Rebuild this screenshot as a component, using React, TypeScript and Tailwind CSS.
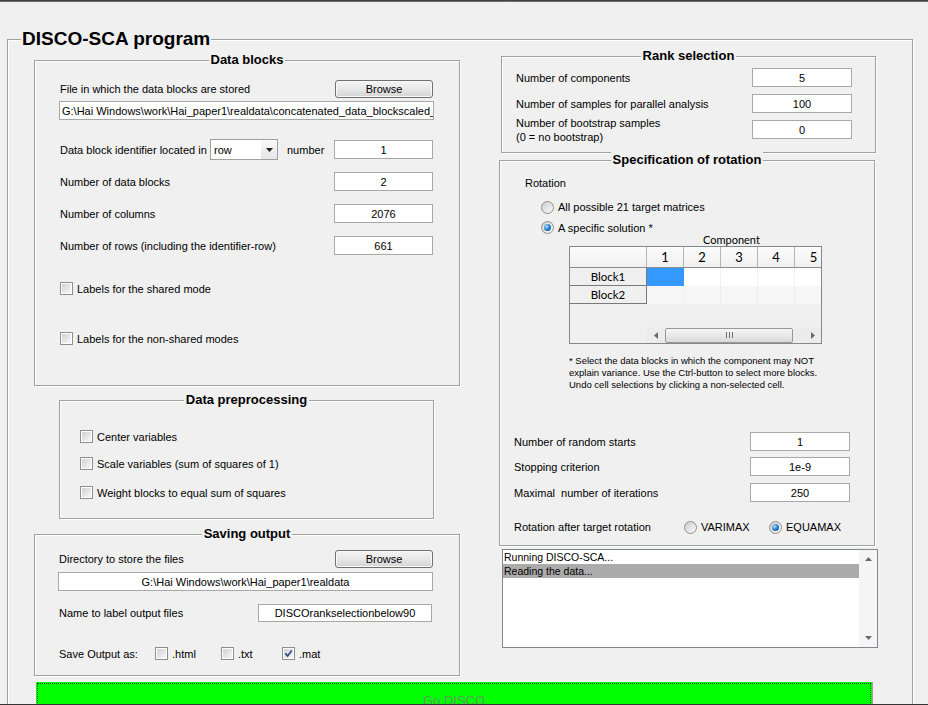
import React from "react";

function Panel({ title, className, children }: { title: string; className: string; children?: React.ReactNode }) {
  return (
    <div className={"border border-[#a0a0a0] shadow-[inset_1px_1px_0_#fff,1px_1px_0_#fff] " + className}>
      <div className="-mt-[9px] mx-auto w-fit bg-[#f0f0f0] px-[2px] text-[13px] font-bold leading-[15px]">{title}</div>
      {children}
    </div>
  );
}

function Box({ className, children }: { className: string; children?: React.ReactNode }) {
  return (
    <div className={"shrink-0 bg-white border border-[#a8a8a8] flex items-center justify-center whitespace-nowrap overflow-hidden " + className}>
      {children}
    </div>
  );
}

function Btn() {
  return (
    <div className="w-[98px] h-[18px] shrink-0 rounded-[3px] border border-[#707070] bg-linear-to-b from-[#f4f4f4] via-[#e8e8e8] to-[#d3d3d3] shadow-[inset_0_0_0_1px_#fafafa] flex items-center justify-center">
      Browse
    </div>
  );
}

function Check({ checked = false }: { checked?: boolean }) {
  return (
    <div className="w-[13px] h-[13px] shrink-0 border border-[#8e8f8f] bg-white p-[1px]">
      <div className="w-full h-full bg-linear-to-br from-[#d2d2d2] to-[#f8f8f8] flex items-center justify-center">
        {checked && (
          <svg width="9" height="9" viewBox="0 0 9 9">
            <path d="M1.3 4.4 L3.6 6.9 L7.8 1.4" stroke="#2c4a8c" strokeWidth="1.7" fill="none" />
          </svg>
        )}
      </div>
    </div>
  );
}

function Radio({ checked = false }: { checked?: boolean }) {
  return (
    <div className="w-[13px] h-[13px] shrink-0 rounded-full border border-[#8e8f8f] bg-linear-to-br from-[#cdcdcd] to-[#fbfbfb] flex items-center justify-center">
      {checked && (
        <div className="w-[7px] h-[7px] rounded-full bg-[radial-gradient(circle_at_35%_35%,#b4e2ff_0%,#2f86d2_45%,#0b3c75_100%)]" />
      )}
    </div>
  );
}

function Select() {
  return (
    <div className="w-[68px] h-[21px] shrink-0 border border-[#a0a0a0] bg-white flex items-center">
      <span className="pl-[3px] flex-1">row</span>
      <div className="w-[16px] h-full flex items-center justify-center bg-linear-to-b from-[#fafafa] to-[#e6e6e6]">
        <svg width="7" height="4" viewBox="0 0 7 4">
          <path d="M0 0 L7 0 L3.5 4 Z" fill="#222" />
        </svg>
      </div>
    </div>
  );
}

function Tri({ dir }: { dir: "l" | "r" | "u" | "d" }) {
  const d =
    dir === "l" ? "M4 0 L4 7 L0 3.5 Z" : dir === "r" ? "M0 0 L0 7 L4 3.5 Z" : dir === "u" ? "M0 4 L7 4 L3.5 0 Z" : "M0 0 L7 0 L3.5 4 Z";
  const w = dir === "l" || dir === "r" ? 4 : 7;
  const h = dir === "l" || dir === "r" ? 7 : 4;
  return (
    <svg width={w} height={h} viewBox={`0 0 ${w} ${h}`}>
      <path d={d} fill="#6a6a6a" />
    </svg>
  );
}

function Table() {
  return (
    <div className="ml-[69px] w-[253px] h-[98px] border border-[#828790] bg-[#f0f0f0] flex flex-col font-['Lato',sans-serif] text-[12px] leading-[14px] overflow-hidden">
      <div className="flex h-[21px] shrink-0 border-b border-[#8a8a8a] bg-linear-to-b from-[#fcfcfc] to-[#f0f0f0] overflow-hidden">
        <div className="w-[77px] shrink-0 border-r border-[#b5b5b5]" />
        <div className="w-[37px] shrink-0 border-r border-[#b5b5b5] flex items-center justify-center text-[13px]">1</div>
        <div className="w-[37px] shrink-0 border-r border-[#b5b5b5] flex items-center justify-center text-[13px]">2</div>
        <div className="w-[37px] shrink-0 border-r border-[#b5b5b5] flex items-center justify-center text-[13px]">3</div>
        <div className="w-[37px] shrink-0 border-r border-[#b5b5b5] flex items-center justify-center text-[13px]">4</div>
        <div className="w-[37px] shrink-0 flex items-center justify-center text-[13px]">5</div>
      </div>
      <div className="flex h-[18px] shrink-0 overflow-hidden">
        <div className="w-[77px] shrink-0 border-r border-b border-[#7a7a7a] flex items-center justify-center text-[11.5px]">Block1</div>
        <div className="w-[37px] shrink-0 bg-[#3399ff]" />
        <div className="w-[37px] shrink-0 bg-white border-r border-[#f2f2f2]" />
        <div className="w-[37px] shrink-0 bg-white border-r border-[#f2f2f2]" />
        <div className="w-[37px] shrink-0 bg-white border-r border-[#f2f2f2]" />
        <div className="w-[37px] shrink-0 bg-white" />
      </div>
      <div className="flex h-[18px] shrink-0 overflow-hidden">
        <div className="w-[77px] shrink-0 border-r border-b border-[#7a7a7a] flex items-center justify-center text-[11.5px]">Block2</div>
        <div className="w-[37px] shrink-0 bg-[#f6f6f6] border-r border-[#ededed]" />
        <div className="w-[37px] shrink-0 bg-[#f6f6f6] border-r border-[#ededed]" />
        <div className="w-[37px] shrink-0 bg-[#f6f6f6] border-r border-[#ededed]" />
        <div className="w-[37px] shrink-0 bg-[#f6f6f6] border-r border-[#ededed]" />
        <div className="w-[37px] shrink-0 bg-[#f6f6f6]" />
      </div>
      <div className="flex-1" />
      <div className="flex h-[16px] shrink-0">
        <div className="w-[77px] shrink-0" />
        <div className="w-[174px] shrink-0 flex items-center bg-[#ececec]">
          <div className="w-[17px] h-full flex items-center justify-center">
            <Tri dir="l" />
          </div>
          <div className="ml-[1px] w-[128px] h-[15px] rounded-[2px] border border-[#979797] bg-linear-to-b from-[#f6f6f6] to-[#d9d9d9] flex items-center justify-center">
            <svg width="7" height="6" viewBox="0 0 7 6">
              <path d="M0.5 0 V6 M3.5 0 V6 M6.5 0 V6" stroke="#6e6e6e" strokeWidth="1" />
            </svg>
          </div>
          <div className="flex-1" />
          <div className="w-[17px] h-full flex items-center justify-center">
            <Tri dir="r" />
          </div>
        </div>
      </div>
    </div>
  );
}

export default function App() {
  return (
    <div className="w-[928px] h-[705px] overflow-hidden bg-[#f0f0f0] border-b border-[#333] font-['Liberation_Sans',Arial,sans-serif] text-[11px] leading-[14px] text-black">
      <div className="h-[2px] bg-linear-to-b from-[#2a2a2a] to-[#8a8a8a]" />
      <div className="ml-[7px] mt-[37px] w-[906px] h-[700px] border border-[#a0a0a0] shadow-[inset_1px_1px_0_#fff,1px_1px_0_#fff]">
        <div className="-mt-[12px] ml-[13px] w-fit bg-[#f0f0f0] px-[1px] text-[19px] font-bold leading-[22px]">DISCO-SCA program</div>

        <div className="flex items-start">
          {/* Left column */}
          <div className="ml-[26px] w-[426px] shrink-0">
            <Panel title="Data blocks" className="mt-[10px] h-[326px]">
              <div className="mt-[13px] flex h-[18px] items-center pl-[25px] pr-[26px]">
                <span className="flex-1">File in which the data blocks are stored</span>
                <Btn />
              </div>
              <div className="mt-[3px] ml-[24px] w-[375px] h-[19px] bg-white border border-[#a8a8a8] pl-[2px] whitespace-nowrap overflow-hidden flex items-center">
                G:\Hai Windows\work\Hai_paper1\realdata\concatenated_data_blockscaled_
              </div>
              <div className="mt-[19px] flex h-[21px] items-center pl-[25px]">
                <span className="w-[150px] shrink-0">Data block identifier located in</span>
                <Select />
                <span className="ml-[9px] w-[47px] shrink-0">number</span>
                <Box className="w-[99px] h-[19px]">1</Box>
              </div>
              <div className="mt-[12px] flex h-[19px] items-center pl-[25px]">
                <span className="w-[274px] shrink-0">Number of data blocks</span>
                <Box className="w-[99px] h-[19px]">2</Box>
              </div>
              <div className="mt-[13px] flex h-[19px] items-center pl-[25px]">
                <span className="w-[274px] shrink-0">Number of columns</span>
                <Box className="w-[99px] h-[19px]">2076</Box>
              </div>
              <div className="mt-[13px] flex h-[19px] items-center pl-[25px]">
                <span className="w-[274px] shrink-0">Number of rows (including the identifier-row)</span>
                <Box className="w-[99px] h-[19px]">661</Box>
              </div>
              <div className="mt-[27px] flex h-[13px] items-center pl-[25px]">
                <Check />
                <span className="ml-[4px]">Labels for the shared mode</span>
              </div>
              <div className="mt-[37px] flex h-[13px] items-center pl-[25px]">
                <Check />
                <span className="ml-[4px]">Labels for the non-shared modes</span>
              </div>
            </Panel>

            <Panel title="Data preprocessing" className="mt-[14px] ml-[25px] w-[375px] h-[119px]">
              <div className="mt-[23px] flex h-[13px] items-center pl-[20px]">
                <Check />
                <span className="ml-[4px]">Center variables</span>
              </div>
              <div className="mt-[14px] flex h-[13px] items-center pl-[20px]">
                <Check />
                <span className="ml-[4px]">Scale variables (sum of squares of 1)</span>
              </div>
              <div className="mt-[16px] flex h-[13px] items-center pl-[20px]">
                <Check />
                <span className="ml-[4px]">Weight blocks to equal sum of squares</span>
              </div>
            </Panel>

            <Panel title="Saving output" className="mt-[15px] h-[142px]">
              <div className="mt-[9px] flex h-[18px] items-center pl-[24px] pr-[26px]">
                <span className="flex-1">Directory to store the files</span>
                <Btn />
              </div>
              <Box className="mt-[4px] ml-[23px] w-[375px] h-[19px]">G:\Hai Windows\work\Hai_paper1\realdata</Box>
              <div className="mt-[13px] flex h-[18px] items-center pl-[24px]">
                <span className="w-[199px] shrink-0">Name to label output files</span>
                <Box className="w-[174px] h-[18px]">DISCOrankselectionbelow90</Box>
              </div>
              <div className="mt-[25px] flex h-[13px] items-center pl-[24px]">
                <span className="w-[96px] shrink-0">Save Output as:</span>
                <div className="w-[66px] shrink-0 flex items-center">
                  <Check />
                  <span className="ml-[4px]">.html</span>
                </div>
                <div className="w-[61px] shrink-0 flex items-center">
                  <Check />
                  <span className="ml-[4px]">.txt</span>
                </div>
                <div className="flex items-center">
                  <Check checked />
                  <span className="ml-[4px]">.mat</span>
                </div>
              </div>
            </Panel>
          </div>

          {/* Right column */}
          <div className="ml-[39px] w-[378px] shrink-0">
            <Panel title="Rank selection" className="mt-[6px] ml-[2px] w-[375px] h-[97px]">
              <div className="mt-[5px] flex h-[19px] items-center pl-[14px]">
                <span className="w-[236px] shrink-0">Number of components</span>
                <Box className="w-[100px] h-[19px]">5</Box>
              </div>
              <div className="mt-[7px] flex h-[19px] items-center pl-[14px]">
                <span className="w-[236px] shrink-0">Number of samples for parallel analysis</span>
                <Box className="w-[100px] h-[19px]">100</Box>
              </div>
              <div className="mt-[7px] flex h-[19px] items-center pl-[14px]">
                <span className="w-[236px] shrink-0">
                  Number of bootstrap samples
                  <br />
                  (0 = no bootstrap)
                </span>
                <Box className="w-[100px] h-[19px]">0</Box>
              </div>
            </Panel>

            <Panel title="Specification of rotation" className="mt-[7px] w-[376px] h-[386px]">
              <div className="mt-[9px] h-[14px] pl-[25px]">Rotation</div>
              <div className="mt-[10px] flex h-[14px] items-center pl-[41px]">
                <Radio />
                <span className="ml-[4px]">All possible 21 target matrices</span>
              </div>
              <div className="mt-[7px] flex h-[13px] items-center pl-[41px]">
                <Radio checked />
                <span className="ml-[4px]">A specific solution *</span>
              </div>
              <div className="h-[12px] pl-[203px] font-['Lato',sans-serif] text-[11px] leading-[12px]">Component</div>
              <Table />
              <div className="mt-[11px] pl-[69px] text-[9.5px] leading-[12px]">
                <div>* Select the data blocks in which the component may NOT</div>
                <div>explain variance. Use the Ctrl-button to select more blocks.</div>
                <div>Undo cell selections by clicking a non-selected cell.</div>
              </div>
              <div className="mt-[41px] flex h-[19px] items-center pl-[14px]">
                <span className="w-[236px] shrink-0">Number of random starts</span>
                <Box className="w-[100px] h-[19px]">1</Box>
              </div>
              <div className="mt-[6px] flex h-[19px] items-center pl-[14px]">
                <span className="w-[236px] shrink-0">Stopping criterion</span>
                <Box className="w-[100px] h-[19px]">1e-9</Box>
              </div>
              <div className="mt-[7px] flex h-[19px] items-center pl-[14px]">
                <span className="w-[236px] shrink-0">Maximal&nbsp; number of iterations</span>
                <Box className="w-[100px] h-[19px]">250</Box>
              </div>
              <div className="mt-[18px] flex h-[14px] items-center pl-[14px]">
                <span className="w-[170px] shrink-0">Rotation after target rotation</span>
                <div className="w-[85px] shrink-0 flex items-center">
                  <Radio />
                  <span className="ml-[4px]">VARIMAX</span>
                </div>
                <div className="flex items-center">
                  <Radio checked />
                  <span className="ml-[4px]">EQUAMAX</span>
                </div>
              </div>
            </Panel>

            <div className="mt-[3px] ml-[3px] w-[376px] h-[99px] border border-[#828790] bg-white flex text-[10.5px]">
              <div className="w-[356px] shrink-0">
                <div className="h-[14px] leading-[14px] pl-[1px]">Running DISCO-SCA...</div>
                <div className="h-[14px] leading-[14px] pl-[1px] bg-[#ababab]">Reading the data...</div>
              </div>
              <div className="flex-1 flex flex-col items-center justify-between py-[7px] bg-[#f5f5f5]">
                <Tri dir="u" />
                <Tri dir="d" />
              </div>
            </div>
          </div>
        </div>

        <div className="mt-[6px] ml-[28px] w-[837px] h-[40px] bg-[#00ff00] border-r border-[#a0a0a0] p-[1px]">
          <div className="h-full border border-dotted border-[#3a3a3a] flex justify-center pt-[9px] text-[13px] leading-[15px] text-[#5f9a5f]">
            Go DISCO
          </div>
        </div>
      </div>
    </div>
  );
}
